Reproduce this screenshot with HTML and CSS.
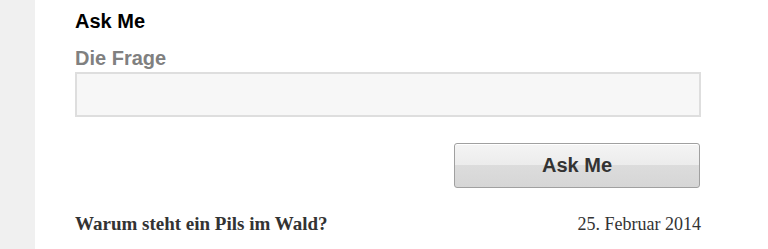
FILE: index.html
```html
<!DOCTYPE html>
<html lang="de">
<head>
<meta charset="utf-8">
<title>Ask Me</title>
<link rel="stylesheet" href="styles.css">
</head>
<body>
<div class="page">
  <div class="side"></div>
  <main class="main">
    <h2 class="title">Ask Me</h2>
    <form class="ask-form">
      <label class="label" for="q">Die Frage</label>
      <input class="field" id="q" type="text">
      <div class="actions">
        <button class="btn" type="button">Ask Me</button>
      </div>
    </form>
    <div class="entry">
      <span class="entry-title">Warum steht ein Pils im Wald?</span>
      <span class="entry-date">25. Februar 2014</span>
    </div>
  </main>
</div>
</body>
</html>
```
FILE: styles.css
```css
html, body {
  margin: 0;
  padding: 0;
  background: #ffffff;
}
.page {
  display: flex;
  min-height: 249px;
}
.side {
  width: 35px;
  flex: 0 0 35px;
  background: #f0f0f0;
}
.main {
  padding-left: 40px;
  width: 626px;
  font-family: "Liberation Sans", Arial, sans-serif;
}
.title {
  margin: 0;
  padding-top: 10px;
  font-size: 20px;
  line-height: 22px;
  font-weight: bold;
  color: #000;
}
.ask-form {
  display: flex;
  flex-direction: column;
}
.label {
  margin-top: 15px;
  font-size: 20px;
  line-height: 22px;
  font-weight: bold;
  color: #808080;
}
.field {
  margin: 3px 0 0 0;
  box-sizing: border-box;
  width: 626px;
  height: 45px;
  border: 2px solid #dedede;
  background: #f7f7f7;
  padding: 0 8px;
  font-size: 16px;
  outline: none;
}
.actions {
  display: flex;
  justify-content: flex-end;
  margin-top: 26px;
  padding-right: 1px;
}
.btn {
  box-sizing: border-box;
  width: 246px;
  height: 45px;
  border: 1px solid #a0a0a0;
  border-radius: 3px;
  background: linear-gradient(to bottom, #f4f4f4 0%, #ececec 48%, #dcdcdc 50%, #d6d6d6 100%);
  box-shadow: inset 0 1px 0 #fff;
  font-family: "Liberation Sans", Arial, sans-serif;
  font-size: 20px;
  font-weight: bold;
  color: #333;
  padding: 0;
}
.entry {
  display: flex;
  justify-content: space-between;
  align-items: baseline;
  margin-top: 25px;
  font-family: "Liberation Serif", Georgia, serif;
  color: #333;
  line-height: 22px;
}
.entry-title {
  font-weight: bold;
  font-size: 19px;
}
.entry-date {
  font-weight: normal;
  font-size: 18px;
}
```
